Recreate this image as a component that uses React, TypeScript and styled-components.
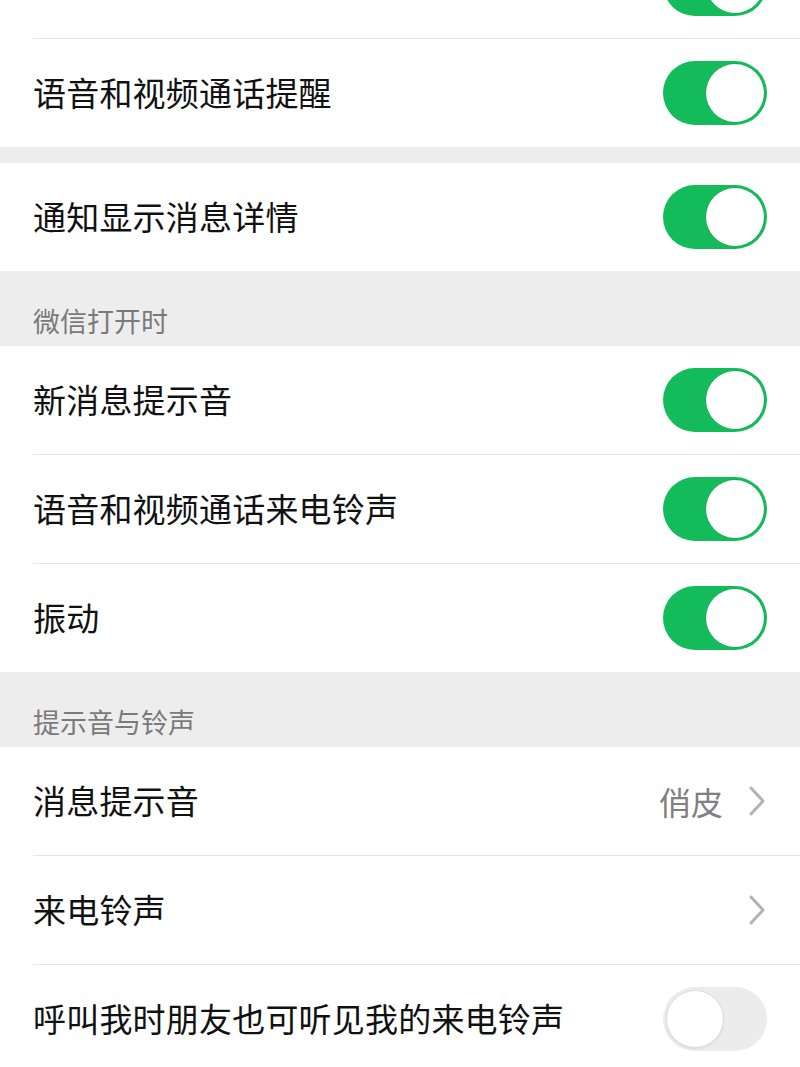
import React from "react";
import styled, { createGlobalStyle } from "styled-components";

const Global = createGlobalStyle`
  html, body {
    margin: 0;
    padding: 0;
    background: #ededed;
  }
  body {
    font-family: "Noto Sans CJK SC", "Noto Sans", sans-serif;
    -webkit-font-smoothing: antialiased;
  }
`;

const Page = styled.div`
  width: 800px;
  height: 1067px;
  overflow: hidden;
  background: #ededed;
`;

const Stack = styled.div`
  display: flex;
  flex-direction: column;
  margin-top: -70px;
`;

const Group = styled.div<{ $gapBefore?: number }>`
  background: #ffffff;
  margin-top: ${(p) => p.$gapBefore ?? 0}px;
  display: flex;
  flex-direction: column;
`;

const Row = styled.div`
  height: 108px;
  display: flex;
  align-items: center;
  padding: 0 33px;
  position: relative;
  & + & {
    border-top: 1px solid #e6e6e6;
    margin-left: 33px;
    padding-left: 0;
  }
`;

const Label = styled.div`
  flex: 1;
  font-size: 33px;
  color: #111111;
  letter-spacing: 0.2px;
  line-height: 1;
  margin-top: -1px;
`;

const SectionHeader = styled.div`
  height: 75px;
  box-sizing: border-box;
  display: flex;
  align-items: flex-end;
  padding: 0 33px 5px;
  font-size: 27px;
  line-height: 40px;
  color: #7a7a7a;
`;

const Track = styled.div<{ $on: boolean }>`
  width: 104px;
  height: 64px;
  border-radius: 32px;
  box-sizing: border-box;
  padding: 3px;
  display: flex;
  justify-content: ${(p) => (p.$on ? "flex-end" : "flex-start")};
  align-items: center;
  background: ${(p) => (p.$on ? "#13bb5b" : "#ececec")};
`;

const Knob = styled.div<{ $on: boolean }>`
  width: 58px;
  height: 58px;
  border-radius: 50%;
  background: #ffffff;
  box-sizing: border-box;
  border: ${(p) => (p.$on ? "none" : "1.5px solid #dcdcdc")};
  box-shadow: ${(p) => (p.$on ? "0 0 0 0.5px #10a852" : "0 1px 2px rgba(0,0,0,0.08)")};
`;

const Value = styled.div`
  font-size: 32px;
  color: #808080;
  line-height: 1;
  margin-right: 24px;
`;

const ChevronWrap = styled.div`
  width: 20px;
  height: 34px;
  display: flex;
  align-items: center;
  justify-content: center;
`;

const Toggle = ({ on }: { on: boolean }) => (
  <Track $on={on}>
    <Knob $on={on} />
  </Track>
);

const Chevron = () => (
  <ChevronWrap>
    <svg width="18" height="32" viewBox="0 0 18 32">
      <path
        d="M3 3 L15 16 L3 29"
        fill="none"
        stroke="#b3b3b3"
        strokeWidth="3"
        strokeLinecap="round"
        strokeLinejoin="round"
      />
    </svg>
  </ChevronWrap>
);

export default function App() {
  return (
    <Page>
      <Global />
      <Stack>
        <Group>
          <Row>
            <Label />
            <Toggle on />
          </Row>
          <Row>
            <Label>语音和视频通话提醒</Label>
            <Toggle on />
          </Row>
        </Group>
        <Group $gapBefore={16}>
          <Row>
            <Label>通知显示消息详情</Label>
            <Toggle on />
          </Row>
        </Group>
        <SectionHeader>微信打开时</SectionHeader>
        <Group>
          <Row>
            <Label>新消息提示音</Label>
            <Toggle on />
          </Row>
          <Row>
            <Label>语音和视频通话来电铃声</Label>
            <Toggle on />
          </Row>
          <Row>
            <Label>振动</Label>
            <Toggle on />
          </Row>
        </Group>
        <SectionHeader>提示音与铃声</SectionHeader>
        <Group>
          <Row>
            <Label>消息提示音</Label>
            <Value>俏皮</Value>
            <Chevron />
          </Row>
          <Row>
            <Label>来电铃声</Label>
            <Chevron />
          </Row>
          <Row>
            <Label>呼叫我时朋友也可听见我的来电铃声</Label>
            <Toggle on={false} />
          </Row>
        </Group>
      </Stack>
    </Page>
  );
}
